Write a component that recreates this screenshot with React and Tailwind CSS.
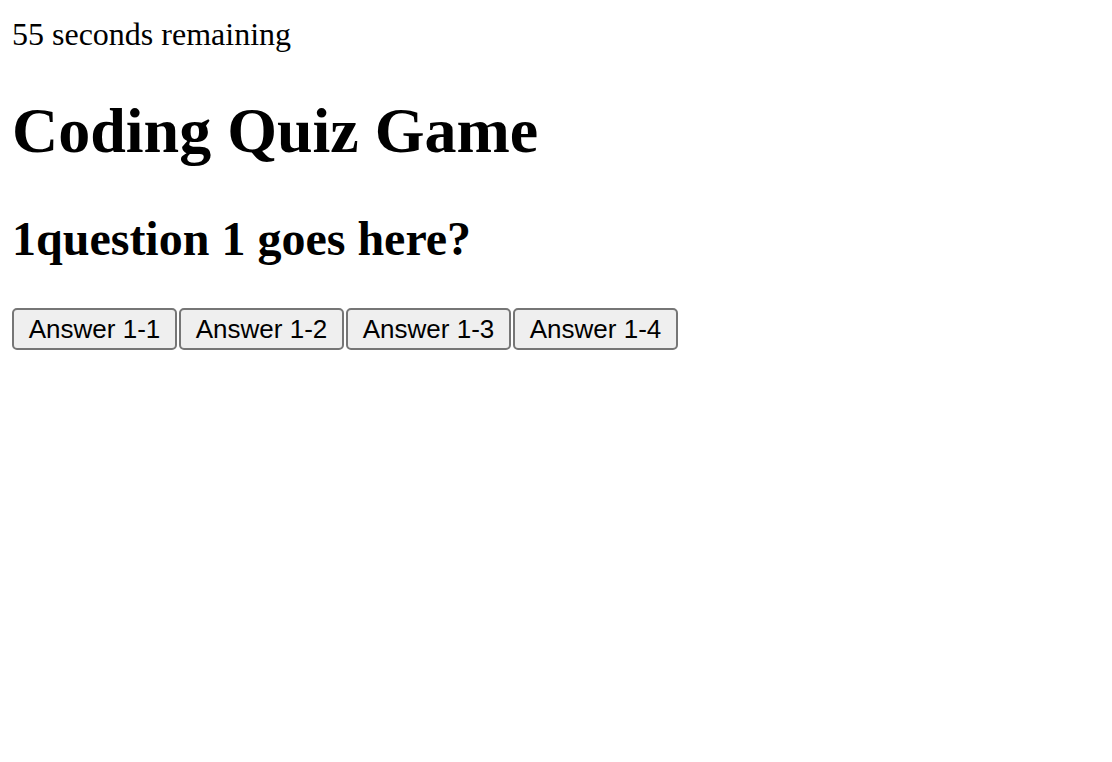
import React from "react";

const answers = ["Answer 1-1", "Answer 1-2", "Answer 1-3", "Answer 1-4"];

const App = () => {
  return (
    <div className="min-h-screen bg-white pl-[12px] text-black font-['Liberation_Serif','Times_New_Roman',serif]">
      {/* Timer */}
      <p className="pt-[16px] text-[32px] leading-[36px]">55 seconds remaining</p>

      {/* Title */}
      <h1 className="mt-[43px] text-[64px] leading-[72px] font-bold">Coding Quiz Game</h1>

      {/* Question */}
      <h2 className="mt-[45px] text-[48px] leading-[54px] font-bold">1question 1 goes here?</h2>

      {/* Answers */}
      <div className="mt-[42px] flex gap-[2px]">
        {answers.map((answer) => (
          <button
            key={answer}
            className="flex h-[42px] w-[165px] items-center justify-center rounded-[5px] border-2 border-[#767676] bg-[#efefef] font-['Liberation_Sans',Arial,sans-serif] text-[26px] leading-none text-black"
          >
            {answer}
          </button>
        ))}
      </div>
    </div>
  );
};

export default App;
